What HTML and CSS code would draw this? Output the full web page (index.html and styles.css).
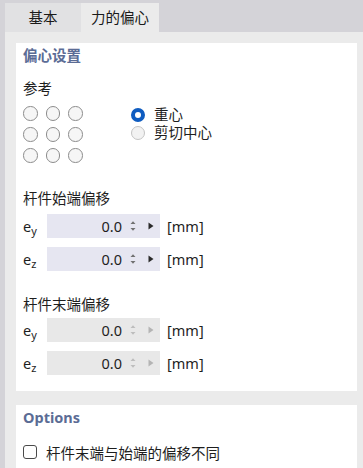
FILE: index.html
```html
<!DOCTYPE html>
<html lang="zh">
<head>
<meta charset="utf-8">
<link rel="stylesheet" href="styles.css">
</head>
<body>
<div class="tabs">
  <div class="tab">基本</div>
  <div class="tab active">力的偏心</div>
</div>
<div class="panel">
  <div class="section main">
    <div class="heading">偏心设置</div>
    <div class="label ref-label">参考</div>
    <div class="ref-row">
      <div class="grid">
        <span class="circ"></span><span class="circ"></span><span class="circ"></span>
        <span class="circ"></span><span class="circ"></span><span class="circ"></span>
        <span class="circ"></span><span class="circ"></span><span class="circ"></span>
      </div>
      <div class="radios">
        <div class="radio-item"><span class="radio on"></span><span class="rtext">重心</span></div>
        <div class="radio-item"><span class="radio off"></span><span class="rtext">剪切中心</span></div>
      </div>
    </div>

    <div class="label group-label">杆件始端偏移</div>
    <div class="field first">
      <span class="sym">e<sub>y</sub></span>
      <div class="box">
        <span class="val">0.0</span>
        <svg class="spin" width="8" height="14" viewBox="0 0 8 14"><path d="M1.5 5 L4 2.2 L6.5 5 Z M1.5 9 L4 11.8 L6.5 9 Z" fill="#707070"/></svg>
        <svg class="arr" width="6" height="8" viewBox="0 0 6 8"><path d="M0.5 0.5 L5.5 4 L0.5 7.5 Z" fill="#2a2a2a"/></svg>
      </div>
      <span class="unit">[mm]</span>
    </div>
    <div class="field">
      <span class="sym">e<sub>z</sub></span>
      <div class="box">
        <span class="val">0.0</span>
        <svg class="spin" width="8" height="14" viewBox="0 0 8 14"><path d="M1.5 5 L4 2.2 L6.5 5 Z M1.5 9 L4 11.8 L6.5 9 Z" fill="#707070"/></svg>
        <svg class="arr" width="6" height="8" viewBox="0 0 6 8"><path d="M0.5 0.5 L5.5 4 L0.5 7.5 Z" fill="#2a2a2a"/></svg>
      </div>
      <span class="unit">[mm]</span>
    </div>

    <div class="label group-label end">杆件末端偏移</div>
    <div class="field first end">
      <span class="sym">e<sub>y</sub></span>
      <div class="box disabled">
        <span class="val">0.0</span>
        <svg class="spin" width="8" height="14" viewBox="0 0 8 14"><path d="M1.5 5 L4 2.2 L6.5 5 Z M1.5 9 L4 11.8 L6.5 9 Z" fill="#bdbdbd"/></svg>
        <svg class="arr" width="6" height="8" viewBox="0 0 6 8"><path d="M0.5 0.5 L5.5 4 L0.5 7.5 Z" fill="#b4b4b4"/></svg>
      </div>
      <span class="unit">[mm]</span>
    </div>
    <div class="field">
      <span class="sym">e<sub>z</sub></span>
      <div class="box disabled">
        <span class="val">0.0</span>
        <svg class="spin" width="8" height="14" viewBox="0 0 8 14"><path d="M1.5 5 L4 2.2 L6.5 5 Z M1.5 9 L4 11.8 L6.5 9 Z" fill="#bdbdbd"/></svg>
        <svg class="arr" width="6" height="8" viewBox="0 0 6 8"><path d="M0.5 0.5 L5.5 4 L0.5 7.5 Z" fill="#b4b4b4"/></svg>
      </div>
      <span class="unit">[mm]</span>
    </div>
  </div>

  <div class="section options">
    <div class="heading">Options</div>
    <div class="check-row">
      <span class="checkbox"></span>
      <span class="ctext">杆件末端与始端的偏移不同</span>
    </div>
  </div>
</div>
</body>
</html>
```

FILE: styles.css
```css
html, body {
  margin: 0;
  padding: 0;
}
body {
  width: 363px;
  height: 468px;
  overflow: hidden;
  background: #d4d3d8;
  font-family: "Noto Sans", "Noto Sans CJK SC", sans-serif;
  font-size: 14.5px;
  color: #1e1e1e;
  display: flex;
  flex-direction: column;
}
.tabs {
  display: flex;
  align-items: flex-end;
  height: 32px;
  padding-left: 5px;
  flex: none;
}
.tab {
  height: 29px;
  line-height: 29px;
  width: 76px;
  text-align: center;
  background: #e1e1e3;
  color: #1a1a1a;
}
.tab.active {
  width: 78px;
  background: #ebebeb;
}
.panel {
  flex: 1;
  margin-left: 5px;
  background: #ebebeb;
  padding: 11px 6px 0 11px;
  display: flex;
  flex-direction: column;
  gap: 14px;
}
.section {
  background: #ffffff;
  padding-left: 7px;
}
.main {
  height: 348px;
  flex: none;
}
.options {
  flex: 1;
}
.heading {
  margin-top: 3px;
  height: 18px;
  line-height: 18px;
  font-weight: bold;
  color: #5b6c95;
}
.label {
  height: 18px;
  line-height: 18px;
}
.ref-label {
  margin-top: 15px;
}
.ref-row {
  display: flex;
  margin-top: 9px;
}
.grid {
  display: grid;
  grid-template-columns: repeat(3, 14px);
  grid-auto-rows: 14px;
  column-gap: 8.5px;
  row-gap: 7px;
}
.circ {
  box-sizing: border-box;
  width: 14.5px;
  height: 14.5px;
  border-radius: 50%;
  border: 1.2px solid #8c8c8c;
  background: #f6f6f6;
}
.radios {
  margin-left: 49px;
  display: flex;
  flex-direction: column;
}
.radio-item {
  display: flex;
  align-items: center;
  height: 18px;
  line-height: 18px;
}
.radio {
  box-sizing: border-box;
  width: 14px;
  height: 14px;
  border-radius: 50%;
  flex: none;
}
.radio.on {
  border: 4px solid #0f5cc0;
  background: #ffffff;
}
.radio.off {
  border: 1.2px solid #c4c4c4;
  background: #f2f2f2;
}
.rtext {
  margin-left: 9px;
  height: 18px;
  line-height: 18px;
  font-family: "Liberation Sans", "Noto Sans CJK SC", sans-serif;
}
.group-label {
  margin-top: 27px;
}
.group-label.end {
  margin-top: 24px;
}
.field {
  display: flex;
  align-items: center;
  height: 24px;
  margin-top: 9px;
}
.field.first {
  margin-top: 7px;
}
.field.first.end {
  margin-top: 5px;
}
.sym {
  width: 24px;
  flex: none;
  font-size: 14.5px;
}
.sym sub {
  font-size: 11px;
  vertical-align: -3px;
  line-height: 0;
}
.box {
  width: 113px;
  height: 24px;
  flex: none;
  background: #e6e6f1;
  display: flex;
  align-items: center;
}
.box.disabled {
  background: #e8e8e8;
}
.val {
  flex: 1;
  text-align: right;
  padding-right: 7px;
}
.spin {
  flex: none;
}
.arr {
  flex: none;
  margin-left: 11px;
  margin-right: 6px;
}
.unit {
  margin-left: 7px;
}
.check-row {
  display: flex;
  align-items: center;
  height: 18px;
  margin-top: 17px;
}
.checkbox {
  box-sizing: border-box;
  width: 14px;
  height: 14px;
  border: 1.2px solid #4a4a4a;
  border-radius: 3px;
  background: #ffffff;
  flex: none;
}
.ctext {
  margin-left: 9px;
}
```
